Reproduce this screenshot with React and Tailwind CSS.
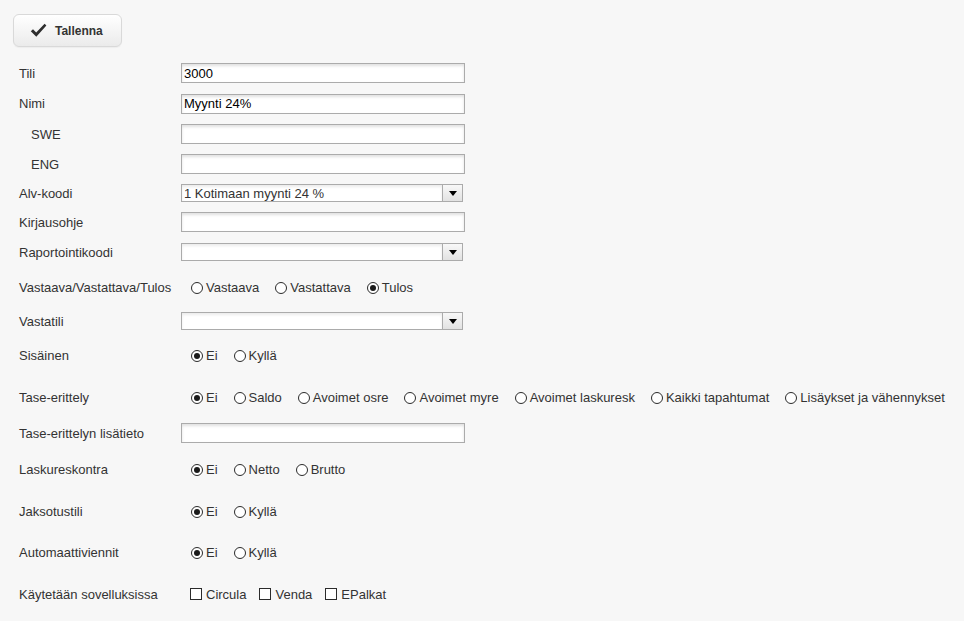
import React from "react";

const font = { fontFamily: '"Liberation Sans", Arial, sans-serif' };

function Check() {
  return (
    <svg width="17" height="15" viewBox="0 0 17 15" className="shrink-0">
      <path d="M0.8 8.2 L3 6.2 L6.2 9.6 L14.6 0.8 L16.4 2.4 L6.3 13.8 Z" fill="#2e2e2e" />
    </svg>
  );
}

function TextInput({ value = "" }) {
  return (
    <div className="w-[284px] h-[20px] border border-[#ababab] bg-white shadow-[inset_0_2px_3px_rgba(0,0,0,0.12)] flex items-center pl-[2px] text-[13px] text-black leading-none">
      {value}
    </div>
  );
}

function Select({ value = "" }) {
  return (
    <div className="w-[282px] h-[18px] border border-[#ababab] bg-white flex items-stretch text-[13px] text-[#333] leading-none">
      <div className="flex-1 flex items-center pl-[2px] shadow-[inset_0_2px_3px_rgba(0,0,0,0.08)]">{value}</div>
      <div className="w-[20px] border-l border-[#ababab] bg-gradient-to-b from-[#f8f8f8] to-[#e2e2e2] flex items-center justify-center">
        <div className="w-0 h-0 border-l-[4px] border-r-[4px] border-t-[5px] border-l-transparent border-r-transparent border-t-black" />
      </div>
    </div>
  );
}

function Radio({ label, checked }) {
  return (
    <div className="flex items-center pt-[1px]">
      <span className="w-[12px] h-[12px] rounded-full border border-[#2b2b2b] bg-white flex items-center justify-center shrink-0">
        {checked && <span className="w-[6px] h-[6px] rounded-full bg-[#1a1a1a]" />}
      </span>
      <span className="ml-[3px] text-[13px] text-[#333] leading-none">{label}</span>
    </div>
  );
}

function RadioGroup({ items, checked }) {
  return (
    <div className="flex items-center gap-[16px] pl-[10px]">
      {items.map((it) => (
        <Radio key={it} label={it} checked={it === checked} />
      ))}
    </div>
  );
}

function Checkbox({ label }) {
  return (
    <div className="flex items-center">
      <span className="w-[12px] h-[12px] border-[1.5px] border-[#2b2b2b] bg-white shrink-0" />
      <span className="ml-[4px] text-[13px] text-[#333] leading-none">{label}</span>
    </div>
  );
}

function Row({ h, label, indent, children }) {
  return (
    <div className={`flex items-center ${h}`}>
      <div className={`w-[181px] shrink-0 text-[13px] text-[#333] leading-none ${indent ? "pl-[31px]" : "pl-[19px]"}`}>
        {label}
      </div>
      <div className="flex items-center">{children}</div>
    </div>
  );
}

export default function App() {
  return (
    <div className="w-[964px] h-[621px] bg-[#f7f7f7] overflow-hidden" style={font}>
      <div className="pt-[14px] pl-[13px] h-[58px]">
        <button className="w-[109px] h-[33px] rounded-[6px] border border-[#d9d9d9] bg-gradient-to-b from-white to-[#ebebeb] flex items-center pl-[16px] gap-[8px] shadow-[0_1px_1px_rgba(0,0,0,0.04)]">
          <Check />
          <span className="text-[12px] font-bold text-[#333] leading-none">Tallenna</span>
        </button>
      </div>

      <Row h="h-[30px]" label="Tili"><TextInput value="3000" /></Row>
      <Row h="h-[31px]" label="Nimi"><TextInput value="Myynti 24%" /></Row>
      <Row h="h-[30px]" label="SWE" indent><TextInput /></Row>
      <Row h="h-[30px]" label="ENG" indent><TextInput /></Row>
      <Row h="h-[28px]" label="Alv-koodi"><Select value="1 Kotimaan myynti 24 %" /></Row>
      <Row h="h-[30px]" label="Kirjausohje"><TextInput /></Row>
      <Row h="h-[30px]" label="Raportointikoodi"><Select /></Row>
      <Row h="h-[40px]" label="Vastaava/Vastattava/Tulos">
        <RadioGroup items={["Vastaava", "Vastattava", "Tulos"]} checked="Tulos" />
      </Row>
      <Row h="h-[28px]" label="Vastatili"><Select /></Row>
      <Row h="h-[40px]" label="Sisäinen">
        <RadioGroup items={["Ei", "Kyllä"]} checked="Ei" />
      </Row>
      <Row h="h-[44px]" label="Tase-erittely">
        <RadioGroup
          items={["Ei", "Saldo", "Avoimet osre", "Avoimet myre", "Avoimet laskuresk", "Kaikki tapahtumat", "Lisäykset ja vähennykset"]}
          checked="Ei"
        />
      </Row>
      <Row h="h-[28px]" label="Tase-erittelyn lisätieto"><TextInput /></Row>
      <Row h="h-[44px]" label="Laskureskontra">
        <RadioGroup items={["Ei", "Netto", "Brutto"]} checked="Ei" />
      </Row>
      <Row h="h-[40px]" label="Jaksotustili">
        <RadioGroup items={["Ei", "Kyllä"]} checked="Ei" />
      </Row>
      <Row h="h-[42px]" label="Automaattiviennit">
        <RadioGroup items={["Ei", "Kyllä"]} checked="Ei" />
      </Row>
      <Row h="h-[42px]" label="Käytetään sovelluksissa">
        <div className="flex items-center gap-[13px] pl-[9px]">
          <Checkbox label="Circula" />
          <Checkbox label="Venda" />
          <Checkbox label="EPalkat" />
        </div>
      </Row>
    </div>
  );
}
